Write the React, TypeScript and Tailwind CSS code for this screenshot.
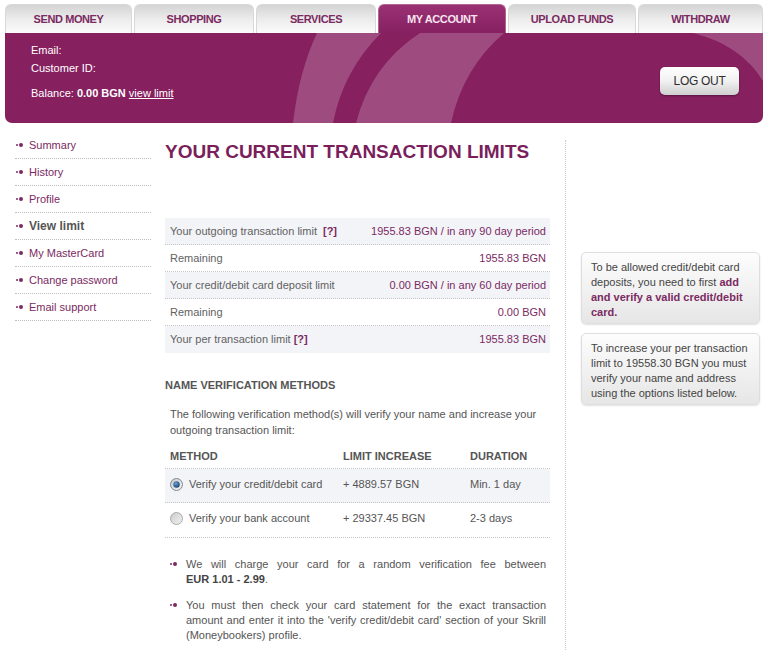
import React from "react";

const tabs: { label: string; w: string; active?: boolean }[] = [
  { label: "SEND MONEY", w: "w-[127px]" },
  { label: "SHOPPING", w: "w-[120px]" },
  { label: "SERVICES", w: "w-[120px]" },
  { label: "MY ACCOUNT", w: "w-[128px]", active: true },
  { label: "UPLOAD FUNDS", w: "w-[128px]" },
  { label: "WITHDRAW", w: "w-[125px]" },
];

const side = [
  "Summary",
  "History",
  "Profile",
  "View limit",
  "My MasterCard",
  "Change password",
  "Email support",
];

function Dots() {
  return (
    <span className="flex items-center w-[13px] shrink-0">
      <span className="w-[2px] h-[2px] rounded-full bg-[#7b2a62]" />
      <span className="ml-[1px] w-[4px] h-[4px] rounded-full bg-[#7b2a62]" />
    </span>
  );
}

function Radio({ checked }: { checked?: boolean }) {
  return (
    <svg width="13" height="13" viewBox="0 0 13 13" className="shrink-0">
      <defs>
        <linearGradient id={checked ? "rg1" : "rg2"} x1="0" y1="0" x2="1" y2="1">
          <stop offset="0" stopColor="#c9c9c9" />
          <stop offset="1" stopColor="#f4f4f4" />
        </linearGradient>
        <radialGradient id="dot" cx="0.4" cy="0.35" r="0.7">
          <stop offset="0" stopColor="#6aa0d8" />
          <stop offset="1" stopColor="#163d6b" />
        </radialGradient>
      </defs>
      <circle cx="6.5" cy="6.5" r="6" fill={`url(#${checked ? "rg1" : "rg2"})`} stroke={checked ? "#7d8a96" : "#a9a9a9"} />
      {checked && <circle cx="6.5" cy="6.5" r="3.2" fill="url(#dot)" />}
    </svg>
  );
}

const limits = [
  { l: "Your outgoing transaction limit", q: true, gap: true, v: "1955.83 BGN / in any 90 day period", shade: true },
  { l: "Remaining", v: "1955.83 BGN" },
  { l: "Your credit/debit card deposit limit", v: "0.00 BGN / in any 60 day period", shade: true },
  { l: "Remaining", v: "0.00 BGN" },
  { l: "Your per transaction limit", q: true, v: "1955.83 BGN", shade: true, last: true },
];

export default function App() {
  return (
    <div className="w-[768px] h-[651px] overflow-hidden bg-white font-['Liberation_Sans',Arial,sans-serif] text-[11px] text-[#5a5a5a]">
      <div className="px-[5px] pt-[4px]">
        <div className="flex gap-[2px] h-[29px]">
          {tabs.map((t) =>
            t.active ? (
              <div
                key={t.label}
                className={`${t.w} flex items-center justify-center rounded-t-[6px] border-t border-x border-[#b0648f] bg-linear-to-b from-[#9a3174] to-[#862061] text-[#f6e4f0] font-bold text-[11px] tracking-[-0.4px]`}
              >
                {t.label}
              </div>
            ) : (
              <div
                key={t.label}
                className={`${t.w} flex items-center justify-center rounded-t-[6px] border-t border-x border-[#d8d8d8] bg-linear-to-b from-[#d4d4d4] via-[#ececec] to-[#fbfbfb] text-[#7b2a62] font-bold text-[11px] tracking-[-0.4px]`}
              >
                {t.label}
              </div>
            )
          )}
        </div>
        <div className="relative h-[90px] bg-[#86205f] rounded-b-[7px] overflow-hidden flex justify-between">
          <svg className="absolute inset-0" width="758" height="90" viewBox="0 0 758 90">
            <path d="M312,0 L376,0 Q338,38 328,90 L288,90 Q294,38 312,0 Z" fill="#ffffff" fillOpacity="0.2" />
            <path d="M415,0 L499,0 Q458,35 446,90 L351,90 Q366,32 415,0 Z" fill="#ffffff" fillOpacity="0.2" />
            <path d="M688,0 Q736,12 758,48 L758,0 Z" fill="#ffffff" fillOpacity="0.2" />
          </svg>
          <div className="relative pl-[26px] pt-[8px] text-white leading-[18px] text-[11px]">
            <div>Email:</div>
            <div>Customer ID:</div>
            <div className="mt-[7px]">
              Balance: <span className="font-bold">0.00 BGN</span> <span className="underline">view limit</span>
            </div>
          </div>
          <div className="relative self-start mt-[34px] mr-[24px] w-[79px] h-[28px] rounded-[5px] bg-linear-to-b from-[#ffffff] via-[#f1f1f1] to-[#cfcfcf] shadow-[0_1px_2px_rgba(0,0,0,0.35)] flex items-center justify-center text-[12px] text-[#2e2e2e] tracking-[-0.3px]">
            LOG OUT
          </div>
        </div>
      </div>

      <div className="flex">
        <div className="ml-[15px] w-[136px] mt-[9px]">
          {side.map((s) => (
            <div key={s} className="h-[27px] border-b border-dotted border-[#bdbdbd] flex items-center pl-[1px]">
              <Dots />
              <span className={s === "View limit" ? "font-bold text-[#555] text-[12px]" : "text-[#7b2a62]"}>{s}</span>
            </div>
          ))}
        </div>

        <div className="ml-[14px] w-[385px] mt-[18px]">
          <h1 className="text-[19px] leading-[22px] font-bold text-[#7a1f5c]">YOUR CURRENT TRANSACTION LIMITS</h1>

          <div className="mt-[55px]">
            {limits.map((r, i) => (
              <div
                key={i}
                className={`h-[27px] flex items-center justify-between pl-[5px] pr-[4px] ${r.shade ? "bg-[#f3f4f8]" : ""} ${r.last ? "" : "border-b border-dotted border-[#c6c6c6]"}`}
              >
                <span className="text-[#626262]">
                  {r.l}
                  {r.q && <span className={`font-bold text-[#7b2a62] ${r.gap ? "ml-[6px]" : "ml-[3px]"}`}>[?]</span>}
                </span>
                <span className="text-[#7b2a62]">{r.v}</span>
              </div>
            ))}
          </div>

          <div className="mt-[26px] font-bold leading-[13px] text-[#555]">NAME VERIFICATION METHODS</div>

          <p className="mt-[14px] pl-[5px] pr-[4px] leading-[16px] text-[#555]">
            The following verification method(s) will verify your name and increase your outgoing transaction limit:
          </p>

          <div className="mt-[6px]">
            <div className="h-[25px] flex items-center border-b border-dotted border-[#c6c6c6] font-bold text-[#555]">
              <div className="w-[178px] pl-[5px]">METHOD</div>
              <div className="w-[127px]">LIMIT INCREASE</div>
              <div className="flex-1">DURATION</div>
            </div>
            <div className="h-[34px] flex items-center pb-[3px] bg-[#f3f4f8] border-b border-dotted border-[#c6c6c6] text-[#555]">
              <div className="w-[178px] pl-[5px] flex items-center gap-[6px]">
                <Radio checked />
                <span>Verify your credit/debit card</span>
              </div>
              <div className="w-[127px]">+ 4889.57 BGN</div>
              <div className="flex-1">Min. 1 day</div>
            </div>
            <div className="h-[35px] flex items-center pb-[4px] border-b border-dotted border-[#c6c6c6] text-[#555]">
              <div className="w-[178px] pl-[5px] flex items-center gap-[6px]">
                <Radio />
                <span>Verify your bank account</span>
              </div>
              <div className="w-[127px]">+ 29337.45 BGN</div>
              <div className="flex-1">2-3 days</div>
            </div>
          </div>

          <div className="mt-[19px] pl-[5px] pr-[4px] text-[#555] leading-[15px]">
            <div className="flex">
              <span className="w-[16px] shrink-0 pt-[5px] self-start flex">
                <Dots />
              </span>
              <p className="text-justify">
                We will charge your card for a random verification fee between{" "}
                <span className="font-bold text-[#444] whitespace-nowrap">EUR 1.01 - 2.99</span>.
              </p>
            </div>
            <div className="flex mt-[11px]">
              <span className="w-[16px] shrink-0 pt-[5px] self-start flex">
                <Dots />
              </span>
              <p className="text-justify">
                You must then check your card statement for the exact transaction amount and enter it into the 'verify credit/debit card' section of your Skrill (Moneybookers) profile.
              </p>
            </div>
          </div>
        </div>

        <div className="ml-[15px] mt-[17px] h-[520px] border-l border-dotted border-[#c8c8c8]" />

        <div className="ml-[15px] mt-[129px] w-[179px] text-[#444] leading-[15px]">
          <div className="rounded-[5px] border border-[#dedede] bg-linear-to-b from-[#fdfdfd] to-[#e6e6e6] shadow-[0_1px_2px_rgba(0,0,0,0.12)] pl-[9px] pr-[8px] pt-[7px] pb-[3px]">
            To be allowed credit/debit card deposits, you need to first{" "}
            <span className="font-bold text-[#7b2a62]">add and verify a valid credit/debit card.</span>
          </div>
          <div className="mt-[9px] rounded-[5px] border border-[#dedede] bg-linear-to-b from-[#fdfdfd] to-[#e6e6e6] shadow-[0_1px_2px_rgba(0,0,0,0.12)] pl-[9px] pr-[8px] pt-[7px] pb-[3px]">
            To increase your per transaction limit to 19558.30 BGN you must verify your name and address using the options listed below.
          </div>
        </div>
      </div>
    </div>
  );
}
